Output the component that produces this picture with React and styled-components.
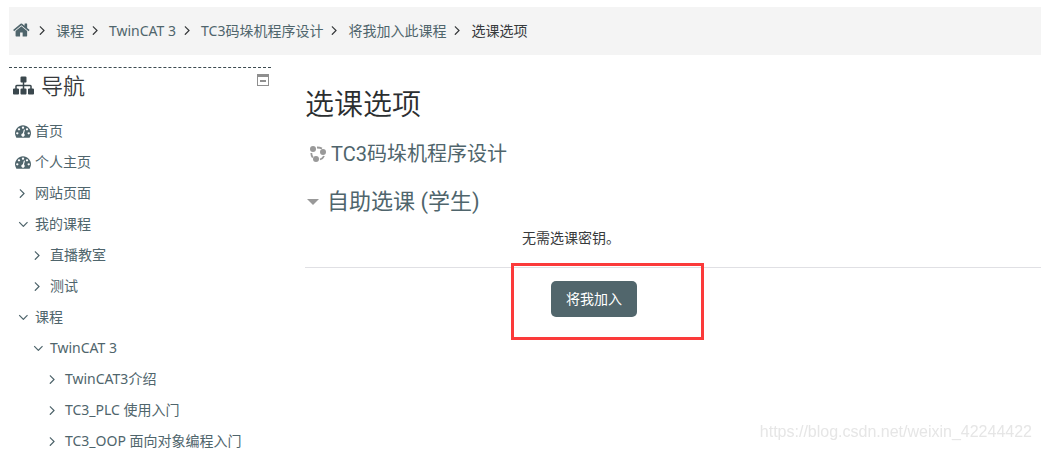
import React from 'react';
import styled, { createGlobalStyle } from 'styled-components';

const GlobalStyle = createGlobalStyle`
  * {
    box-sizing: border-box;
  }
  html {
    overflow: hidden;
  }
  body {
    margin: 0;
    background: #fff;
    color: #373a3c;
    font-family: "Noto Sans", "Noto Sans CJK SC", sans-serif;
    font-size: 14px;
    line-height: 21px;
  }
  a {
    color: #4f656c;
    text-decoration: none;
  }
  ul, ol {
    list-style: none;
    margin: 0;
    padding: 0;
  }
`;

const Page = styled.div`
  padding: 7px 0 0 9px;
`;

const Breadcrumb = styled.nav`
  background: #f4f4f4;
  height: 48px;
  padding: 0 4px 2px;
  ol {
    display: flex;
    align-items: center;
    height: 100%;
  }
`;

const Crumb = styled.li`
  display: flex;
  align-items: center;
  white-space: nowrap;
  a {
    display: flex;
  }
`;

const Icon = styled.svg`
  display: block;
  flex: none;
  width: ${(props) => props.$size || 16}px;
  height: ${(props) => props.$size || 16}px;
  fill: currentColor;
`;

const Separator = styled(Icon)`
  margin: 0 5px 0 4px;
  color: #373a3c;
`;

const Columns = styled.div`
  display: grid;
  grid-template-columns: 262px minmax(0, 1fr);
  column-gap: 34px;
  padding-top: 12px;
`;

const Sidebar = styled.aside`
  border-top: 1px dashed #3c4a50;
`;

const BlockHeader = styled.div`
  display: flex;
  align-items: flex-start;
  justify-content: space-between;
  padding: 2px 2px 0 4px;
`;

const BlockTitle = styled.h2`
  display: flex;
  align-items: center;
  gap: 7px;
  margin: 0;
  font-size: 22px;
  line-height: 30px;
  font-weight: 350;
  color: #373a3c;
  svg {
    color: #3a474d;
  }
`;

const CollapseButton = styled.button`
  display: block;
  margin: 4px 0 0;
  padding: 0;
  border: none;
  background: none;
  color: #8f8f8f;
  cursor: pointer;
`;

const Tree = styled.ul`
  padding-top: 15px;
`;

const TreeRow = styled.li`
  display: flex;
  align-items: center;
  gap: 4px;
  height: 31px;
  padding-left: ${(props) => 6 + props.$level * 15}px;
  color: #4f656c;
  white-space: nowrap;
`;

const Main = styled.main`
  padding-top: 12px;
`;

const PageTitle = styled.h1`
  margin: 0;
  font-size: 29px;
  line-height: 50px;
  font-weight: 350;
  color: #2b2e30;
`;

const CourseName = styled.h3`
  display: flex;
  align-items: center;
  gap: 5px;
  margin: 10px 0 0 5px;
  font-family: Roboto, "Noto Sans CJK SC", sans-serif;
  font-size: 20px;
  line-height: 30px;
  font-weight: 400;
  svg {
    color: #999;
  }
`;

const EnrolForm = styled.form`
  margin: 0;
`;

const Legend = styled.h3`
  display: flex;
  align-items: center;
  gap: 6px;
  margin: 16px 0 0;
  font-family: Roboto, "Noto Sans CJK SC", sans-serif;
  font-size: 22px;
  line-height: 34px;
  font-weight: 400;
  svg {
    color: #999;
  }
`;

const Hint = styled.p`
  margin: 8px 0 19px;
  padding-left: 217px;
`;

const Actions = styled.div`
  position: relative;
  border-top: 1px solid #e0e0e4;
  padding: 13px 0 0 246px;
`;

const Highlight = styled.div`
  position: absolute;
  top: -5px;
  left: 206px;
  width: 193px;
  height: 77px;
  border: 3px solid #fb3a3a;
  pointer-events: none;
`;

const SubmitButton = styled.button`
  width: 86px;
  height: 36px;
  padding: 0 0 1px;
  border: none;
  border-radius: 5px;
  background: #51666c;
  color: #fff;
  font: inherit;
  cursor: pointer;
`;

const Watermark = styled.div`
  position: fixed;
  right: 9px;
  bottom: 7px;
  color: #e6e6e6;
  font-family: "Liberation Sans", Arial, sans-serif;
  font-size: 16px;
  line-height: 22px;
`;

const paths = {
  home: 'M1408 992v480q0 26-19 45t-45 19h-384v-384h-256v384h-384q-26 0-45-19t-19-45v-480q0-1 .5-3t.5-3l575-474 575 474q1 2 1 6zm223-69l-62 74q-8 9-21 11h-3q-13 0-21-7l-692-577-692 577q-12 8-24 7-13-2-21-11l-62-74q-8-10-7-23.5t11-21.5l719-599q32-26 76-26t76 26l244 204v-195q0-14 9-23t23-9h192q14 0 23 9t9 23v408l219 182q10 8 11 21.5t-7 23.5z',
  sitemap: 'M1792 1248v320q0 40-28 68t-68 28h-320q-40 0-68-28t-28-68v-320q0-40 28-68t68-28h96v-192h-512v192h96q40 0 68 28t28 68v320q0 40-28 68t-68 28h-320q-40 0-68-28t-28-68v-320q0-40 28-68t68-28h96v-192h-512v192h96q40 0 68 28t28 68v320q0 40-28 68t-68 28h-320q-40 0-68-28t-28-68v-320q0-40 28-68t68-28h96v-192q0-52 38-90t90-38h512v-192h-96q-40 0-68-28t-28-68v-320q0-40 28-68t68-28h320q40 0 68 28t28 68v320q0 40-28 68t-68 28h-96v192h512q52 0 90 38t38 90v192h96q40 0 68 28t28 68z',
  dashboard: 'M384 1152q0-53-37.5-90.5t-90.5-37.5-90.5 37.5-37.5 90.5 37.5 90.5 90.5 37.5 90.5-37.5 37.5-90.5zm192-448q0-53-37.5-90.5t-90.5-37.5-90.5 37.5-37.5 90.5 37.5 90.5 90.5 37.5 90.5-37.5 37.5-90.5zm428 481l101-382q6-26-7.5-48.5t-38.5-29.5-48 6.5-30 39.5l-101 382q-60 5-107 43.5t-63 98.5q-20 77 20 146t117 89 146-20 89-117q16-60-6-117t-72-91zm660-33q0-53-37.5-90.5t-90.5-37.5-90.5 37.5-37.5 90.5 37.5 90.5 90.5 37.5 90.5-37.5 37.5-90.5zm-640-640q0-53-37.5-90.5t-90.5-37.5-90.5 37.5-37.5 90.5 37.5 90.5 90.5 37.5 90.5-37.5 37.5-90.5zm448 192q0-53-37.5-90.5t-90.5-37.5-90.5 37.5-37.5 90.5 37.5 90.5 90.5 37.5 90.5-37.5 37.5-90.5zm320 448q0 261-141 483-19 29-54 29h-1402q-35 0-54-29-141-221-141-483 0-182 71-348t191-286 286-191 348-71 348 71 286 191 191 286 71 348z',
  right: 'M1091 960q0 13-10 23l-466 466q-10 10-23 10t-23-10l-50-50q-10-10-10-23t10-23l393-393-393-393q-10-10-10-23t10-23l50-50q10-10 23-10t23 10l466 466q10 10 10 23z',
  down: 'M1435 736q0 13-10 23l-466 466q-10 10-23 10t-23-10l-466-466q-10-10-10-23t10-23l50-50q10-10 23-10t23 10l393 393 393-393q10-10 23-10t23 10l50 50q10 10 10 23z',
};

const Glyph = ({ name, size }) => (
  <Icon $size={size} viewBox="0 0 1792 1792" aria-hidden="true">
    <path d={paths[name]} />
  </Icon>
);

const crumbs = ['课程', 'TwinCAT 3', 'TC3码垛机程序设计', '将我加入此课程'];

const treeItems = [
  { label: '首页', icon: 'dashboard', level: 0 },
  { label: '个人主页', icon: 'dashboard', level: 0 },
  { label: '网站页面', icon: 'right', level: 0 },
  { label: '我的课程', icon: 'down', level: 0 },
  { label: '直播教室', icon: 'right', level: 1 },
  { label: '测试', icon: 'right', level: 1 },
  { label: '课程', icon: 'down', level: 0 },
  { label: 'TwinCAT 3', icon: 'down', level: 1 },
  { label: 'TwinCAT3介绍', icon: 'right', level: 2 },
  { label: 'TC3_PLC 使用入门', icon: 'right', level: 2 },
  { label: 'TC3_OOP 面向对象编程入门', icon: 'right', level: 2 },
];

const CrumbSeparator = () => (
  <Separator viewBox="0 0 1792 1792" aria-hidden="true">
    <path d={paths.right} />
  </Separator>
);

const Breadcrumbs = () => (
  <Breadcrumb aria-label="breadcrumb">
    <ol>
      <Crumb>
        <a href="#home" aria-label="首页"><Glyph name="home" size={18} /></a>
      </Crumb>
      {crumbs.map((label) => (
        <Crumb key={label}>
          <CrumbSeparator />
          <a href="#crumb">{label}</a>
        </Crumb>
      ))}
      <Crumb aria-current="page">
        <CrumbSeparator />
        选课选项
      </Crumb>
    </ol>
  </Breadcrumb>
);

const Navigation = () => (
  <Sidebar>
    <BlockHeader>
      <BlockTitle>
        <Glyph name="sitemap" size={21} />
        导航
      </BlockTitle>
      <CollapseButton type="button" aria-label="折叠">
        <Icon $size={12} viewBox="0 0 12 12" aria-hidden="true">
          <path d="M0 0h12v12H0zM1 3v8h10V3zM3 6h6v2H3z" fillRule="evenodd" />
        </Icon>
      </CollapseButton>
    </BlockHeader>
    <Tree>
      {treeItems.map((item) => (
        <TreeRow key={item.label + item.level} $level={item.level}>
          <Glyph name={item.icon} size={16} />
          <a href="#node">{item.label}</a>
        </TreeRow>
      ))}
    </Tree>
  </Sidebar>
);

const App = () => (
  <Page>
    <GlobalStyle />
    <Breadcrumbs />
    <Columns>
      <Navigation />
      <Main>
        <PageTitle>选课选项</PageTitle>
        <CourseName>
          <Icon $size={16} viewBox="0 0 16 16" aria-hidden="true">
            <circle cx="3" cy="3" r="3" />
            <circle cx="13" cy="6" r="3" />
            <circle cx="6" cy="13" r="3" />
            <path d="M7 1.5q3 0 5 1M1.3 7q0 3 1.5 4.5M10 13.5q3-1 4-3.5" fill="none" stroke="currentColor" strokeWidth="1.8" />
          </Icon>
          <a href="#course">TC3码垛机程序设计</a>
        </CourseName>
        <EnrolForm onSubmit={(e) => e.preventDefault()}>
          <Legend>
            <Icon $size={16} viewBox="0 0 16 16" aria-hidden="true">
              <path d="M2 5h12l-6 6z" />
            </Icon>
            <a href="#self">自助选课 (学生)</a>
          </Legend>
          <Hint>无需选课密钥。</Hint>
          <Actions>
            <SubmitButton type="submit">将我加入</SubmitButton>
            <Highlight />
          </Actions>
        </EnrolForm>
      </Main>
    </Columns>
    <Watermark>https://blog.csdn.net/weixin_42244422</Watermark>
  </Page>
);

export default App;
